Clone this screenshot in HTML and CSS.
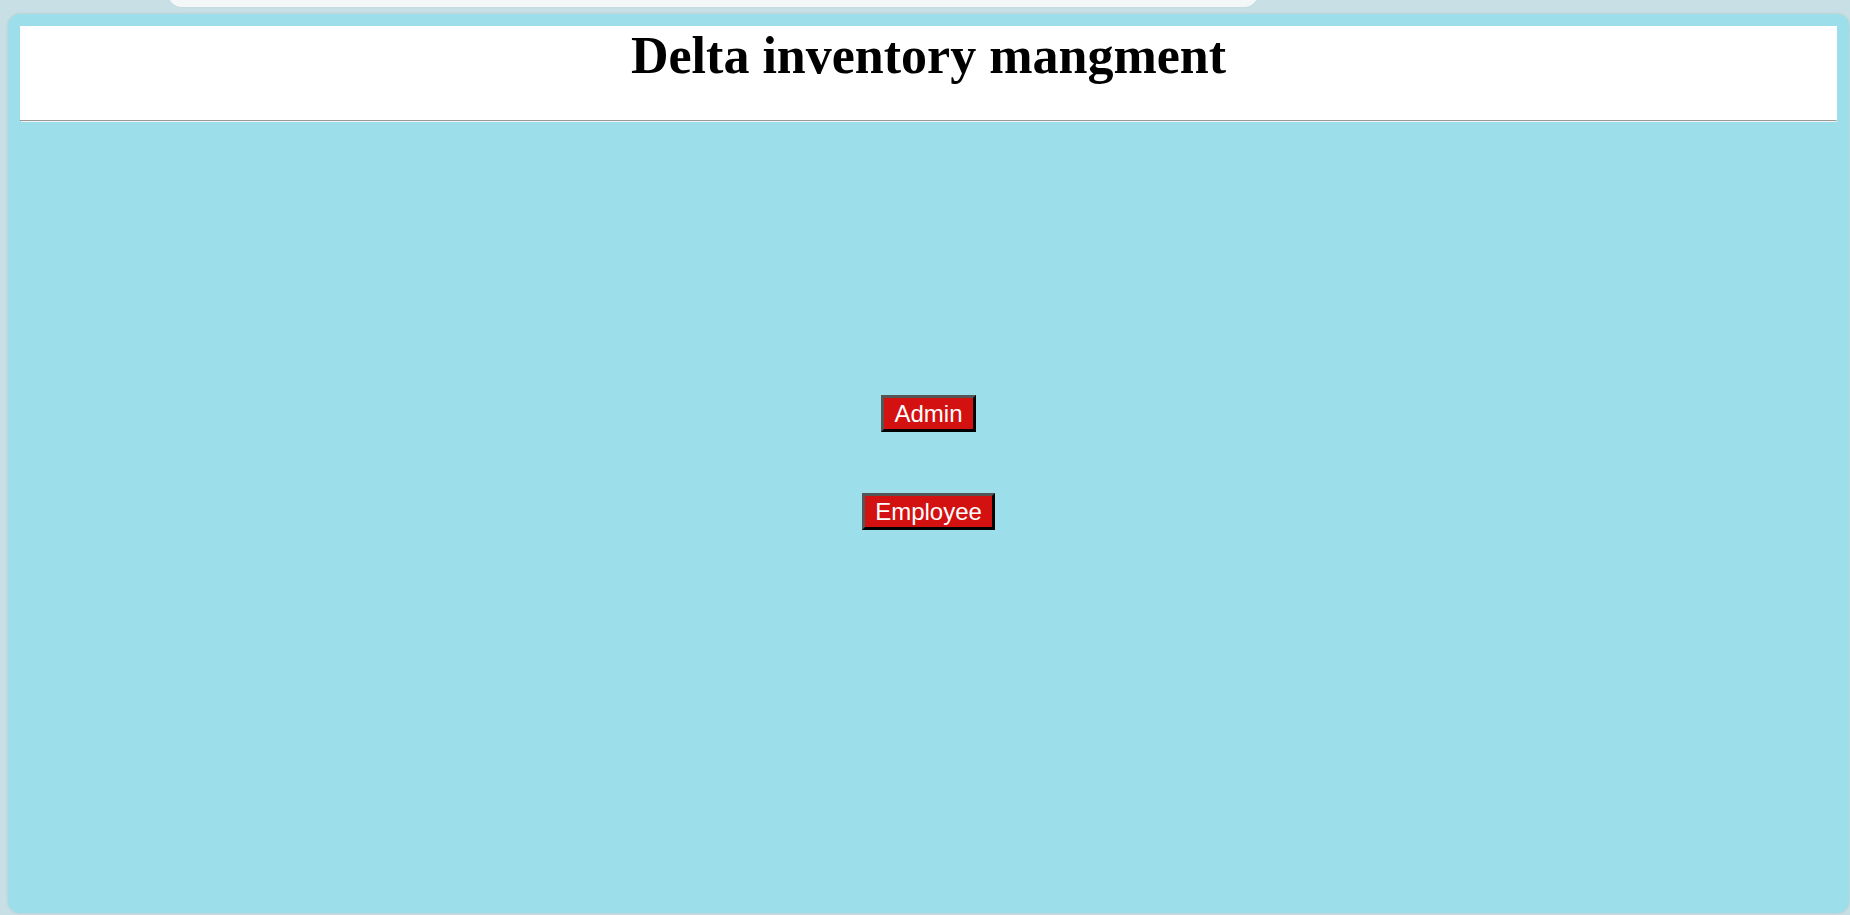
FILE: index.html
```html
<!DOCTYPE html>
<html>
<head>
<meta charset="utf-8">
<title>Delta inventory mangment</title>
<link rel="stylesheet" href="styles.css">
</head>
<body>
<div class="tab-pill"></div>
<div class="panel">
  <div class="header">
    <h1 class="title">Delta inventory mangment</h1>
  </div>
  <hr class="rule">
  <div class="actions">
    <button class="btn">Admin</button>
    <button class="btn">Employee</button>
  </div>
</div>
</body>
</html>
```

FILE: styles.css
```css
html, body {
  margin: 0;
  padding: 0;
}
body {
  background: #c8e0e5;
  width: 1850px;
  height: 915px;
  overflow: hidden;
  position: relative;
  font-family: "Liberation Sans", Arial, sans-serif;
}
.tab-pill {
  position: absolute;
  left: 168px;
  top: -20px;
  width: 1090px;
  height: 27px;
  background: #f3f7f8;
  border-radius: 14px;
  box-shadow: 0 0 2px rgba(0, 0, 0, 0.08);
}
.panel {
  box-sizing: border-box;
  margin: 14px 1px 0 8px;
  height: 899px;
  background: #9cdeea;
  border-radius: 12px;
  padding: 12px 12px;
  box-shadow: 0 0 3px rgba(0, 0, 0, 0.12);
}
.header {
  background: #ffffff;
  height: 94px;
}
.title {
  margin: 0;
  text-align: center;
  font-family: "Liberation Serif", "Times New Roman", serif;
  font-weight: bold;
  font-size: 52px;
  line-height: normal;
  color: #000;
}
.rule {
  margin: 0;
  height: 0;
  border-style: solid;
  border-width: 1px;
  border-color: #9a9a9a #f2f2f2 #f2f2f2 #9a9a9a;
}
.actions {
  display: flex;
  flex-direction: column;
  align-items: center;
  gap: 61px;
  margin-top: 273px;
}
.btn {
  font-family: "Liberation Sans", Arial, sans-serif;
  font-size: 24px;
  line-height: 27px;
  color: #ffffff;
  background: #d31111;
  padding: 2px 10px 2px;
  border-style: solid;
  border-width: 3px;
  border-color: #555555 #000000 #000000 #555555;
  border-radius: 0;
  margin: 0;
  cursor: pointer;
}
```
